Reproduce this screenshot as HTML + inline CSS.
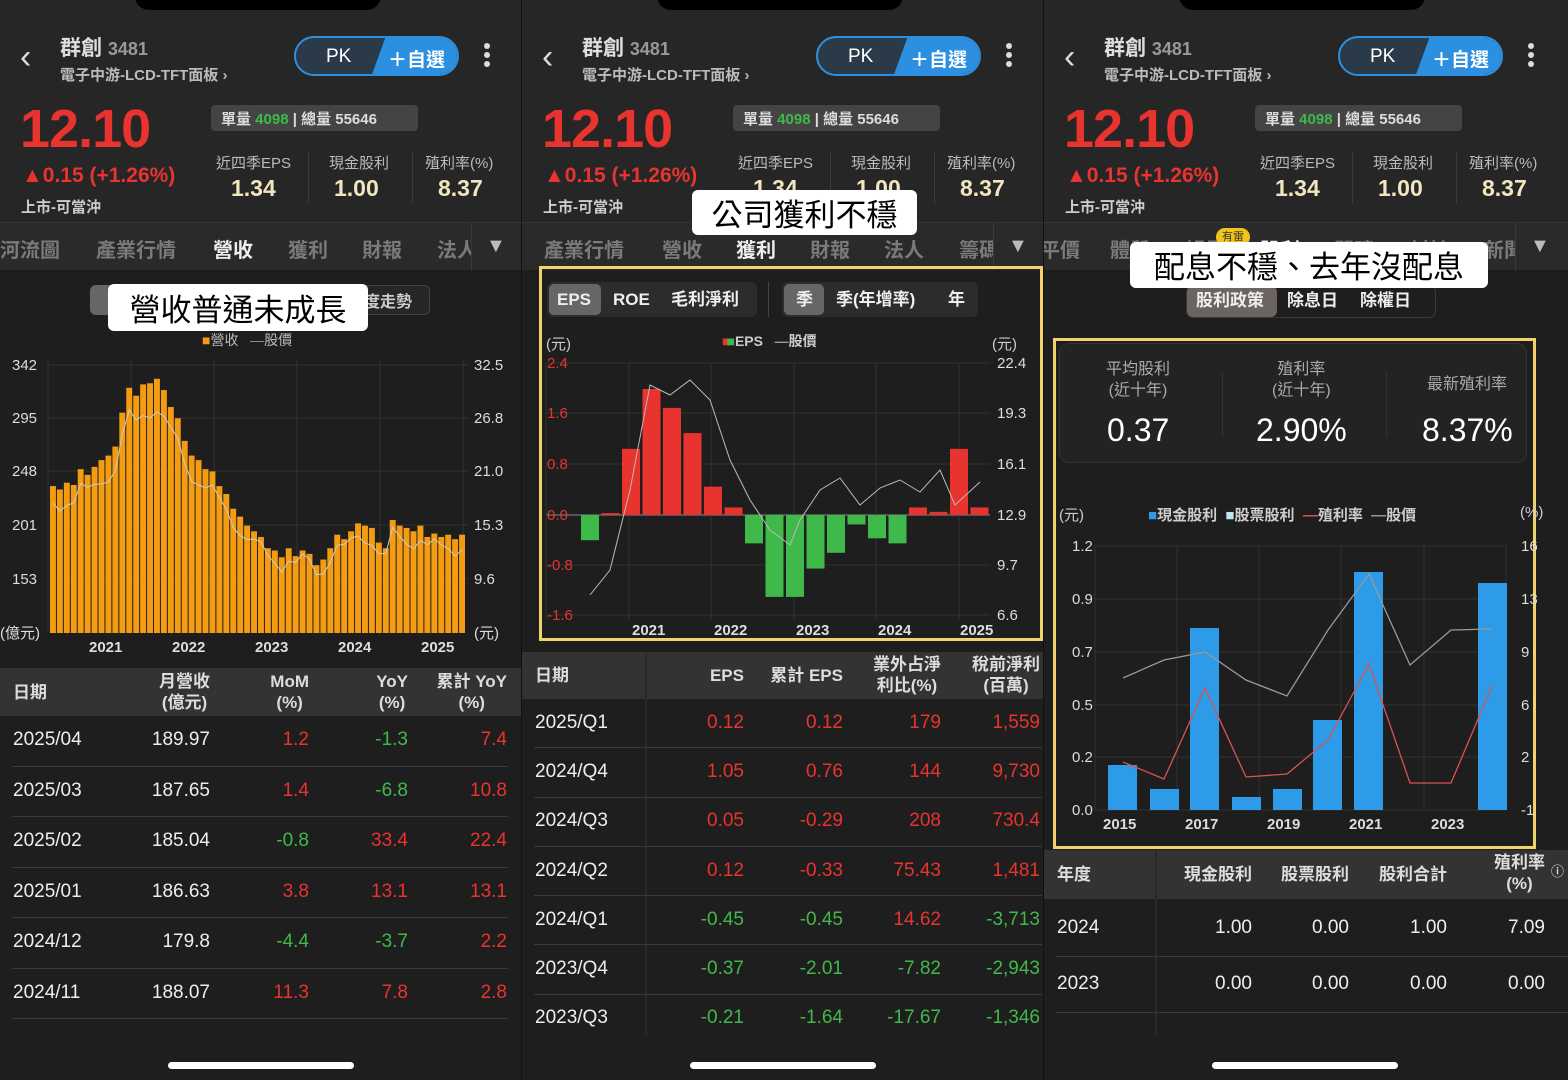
<!DOCTYPE html><html><head><meta charset="utf-8"><style>
*{margin:0;padding:0;box-sizing:border-box}
body{width:1568px;height:1080px;background:#1c1c1c;font-family:"Liberation Sans","Noto Sans CJK TC",sans-serif;color:#ddd;position:relative;overflow:hidden}
.a{position:absolute;white-space:nowrap}
.p{position:absolute;top:0;height:1080px;overflow:hidden;background:#1e1e1e}
.hd{position:absolute;left:0;top:0;width:100%;height:222px;background:#262626}
.notch{position:absolute;top:-12px;width:246px;height:22px;background:#000;border-radius:0 0 14px 14px}
.tabs{position:absolute;top:222px;height:48px;background:#2a2a2a;border-top:1px solid #333;overflow:hidden}
.tabs span{position:absolute;top:11px;font-size:20px;color:#7a7a7a;font-weight:bold}
.w{color:#eee!important}
.r{color:#e8332f}.g{color:#3fb94a}
.th{position:absolute;background:#333;color:#ddd;font-size:17px;font-weight:bold;line-height:1.25}
.row{position:absolute;font-size:19px;color:#eee;border-bottom:1px solid #3a3a3a}
.row span,.th span{position:absolute;text-align:right;white-space:nowrap}
.note{position:absolute;background:#fff;color:#000;font-size:31px;border-radius:6px;text-align:center;font-family:"Noto Sans CJK TC",sans-serif}
.home{position:absolute;top:1062px;width:186px;height:7px;border-radius:4px;background:#fff}
.pill{position:absolute;top:36px;height:40px;width:165px;border:2px solid #2d8fe0;border-radius:20px;overflow:hidden;background:#2b3a48}
.seg{position:absolute;font-size:17px;font-weight:bold;color:#eee;line-height:1}
</style></head><body>
<div id="root"></div>
<script>
function panel(x,w){
 return `<div class="p" style="left:${x}px;width:${w}px">
 <div class="hd"></div><div class="notch" style="left:135px"></div>
 <div class="a" style="left:20px;top:38px;font-size:34px;color:#ddd">‹</div>
 <div class="a" style="left:60px;top:32px;font-size:21px;font-weight:bold;color:#ddd">群創 <span style="color:#999;font-size:18px">3481</span></div>
 <div class="a" style="left:60px;top:64px;font-size:15px;color:#bbb;font-weight:bold">電子中游-LCD-TFT面板 ›</div>
 <div class="pill" style="left:294px"><div class="a" style="left:30px;top:8px;font-size:19px;color:#fff">PK</div><div class="a" style="left:82px;top:-2px;width:100px;height:44px;background:#2d8fe0;transform:skewX(-20deg)"></div><div class="a" style="left:92px;top:7px;font-size:19px;color:#fff;font-weight:bold">＋自選</div></div>
 <div class="a" style="left:484px;top:43px;width:6px;height:6px;border-radius:3px;background:#ddd;box-shadow:0 9px #ddd,0 18px #ddd"></div>
 <div class="a" style="left:20px;top:98px;font-size:54px;font-weight:bold;color:#e8332f;letter-spacing:-1px">12.10</div>
 <div class="a" style="left:22px;top:164px;font-size:21px;font-weight:bold;color:#e8332f">▲0.15 (+1.26%)</div>
 <div class="a" style="left:21px;top:196px;font-size:15px;color:#ccc;font-weight:bold">上市-可當沖</div>
 <div class="a" style="left:211px;top:105px;width:207px;height:26px;background:#444;border-radius:4px;font-size:15px;font-weight:bold;color:#ddd;padding:3px 10px">單量 <span class="g">4098</span> | 總量 55646</div>
 <div class="a" style="left:216px;top:152px;font-size:15px;color:#bbb">近四季EPS</div><div class="a" style="left:231px;top:175px;font-size:23px;font-weight:bold;color:#f1e6c0">1.34</div>
 <div class="a" style="left:329px;top:152px;font-size:15px;color:#bbb">現金股利</div><div class="a" style="left:334px;top:175px;font-size:23px;font-weight:bold;color:#f1e6c0">1.00</div>
 <div class="a" style="left:425px;top:152px;font-size:15px;color:#bbb">殖利率(%)</div><div class="a" style="left:438px;top:175px;font-size:23px;font-weight:bold;color:#f1e6c0">8.37</div>
 <div class="a" style="left:308px;top:152px;width:1px;height:52px;background:#3a3a3a"></div><div class="a" style="left:412px;top:152px;width:1px;height:52px;background:#3a3a3a"></div>
 </div>`;
}
let H='';
H+=panel(0,521)+panel(522,521)+panel(1044,524);
function tabs(x,items){let s=`<div class="tabs" style="left:${x}px;width:${x==1044?524:521}px">`;items.forEach(t=>s+=`<span class="${t[2]||''}" style="left:${t[1]}px">${t[0]}</span>`);s+=`<div class="a" style="left:471px;top:0;width:50px;height:48px;background:#2a2a2a;border-left:1px solid #3a3a3a"></div><span style="left:486px;top:12px;color:#bbb">▼</span></div>`;return s}
H+=tabs(0,[["河流圖",0],["產業行情",96],["營收",213,"w"],["獲利",288],["財報",362],["法人",437]]);
H+=tabs(522,[["產業行情",22],["營收",140],["獲利",214,"w"],["財報",288],["法人",362],["籌碼",437]]);
H+=tabs(1044,[["平價",-4],["體質",66],["婦電",142],["股利",216,"w"],["門睛",290],["討論",366],["新聞",440]]);
H+=`<div class="a" style="left:1216px;top:228px;width:34px;height:18px;border-radius:9px;background:#f0c419;color:#333;font-size:11px;text-align:center;line-height:18px">有雷</div>`;
document.getElementById('root').innerHTML=H;
</script>
<!-- Panel 1 chart -->
<div class="a" style="left:90px;top:285px;width:340px;height:30px;border:1px solid #444;border-radius:6px;background:#262626"></div>
<div class="a" style="left:90px;top:285px;width:60px;height:30px;border-radius:6px;background:#666"></div>
<div class="a" style="left:364px;top:288px;font-size:16px;font-weight:bold;color:#ccc">度走勢</div>
<div class="a" style="left:202px;top:330px;font-size:14px;color:#bbb"><span style="color:#f39c12">■</span>營收 &nbsp; <span style="color:#999">—</span>股價</div>
<svg class="a" style="left:0;top:350px" width="521" height="310" id="c1"></svg>
<div class="note" style="left:108px;top:284px;width:260px;height:47px;line-height:47px">營收普通未成長</div>
<div class="th" style="left:0;top:668px;width:521px;height:48px"><span style="left:13px;top:14px">日期</span><span style="right:311px;top:3px;text-align:center">月營收<br>(億元)</span><span style="right:212px;top:3px;text-align:center">MoM<br>(%)</span><span style="right:113px;top:3px;text-align:center">YoY<br>(%)</span><span style="right:14px;top:3px;text-align:center">累計 YoY<br>(%)</span></div>
<div id="t1"></div>
<!-- Panel 2 -->
<div class="a" style="left:539px;top:266px;width:504px;height:375px;border:3px solid #f2d36b"></div>
<div class="a" style="left:547px;top:282px;width:210px;height:35px;border-radius:6px;background:#2c2c2c"></div>
<div class="a" style="left:549px;top:284px;width:52px;height:31px;border-radius:5px;background:#666"></div>
<div class="seg" style="left:557px;top:291px">EPS</div><div class="seg" style="left:613px;top:291px">ROE</div><div class="seg" style="left:671px;top:291px">毛利淨利</div>
<div class="a" style="left:768px;top:282px;width:1px;height:35px;background:#444"></div>
<div class="a" style="left:782px;top:282px;width:196px;height:35px;border-radius:6px;background:#2c2c2c"></div>
<div class="a" style="left:784px;top:284px;width:40px;height:31px;border-radius:5px;background:#666"></div>
<div class="seg" style="left:796px;top:291px">季</div><div class="seg" style="left:836px;top:291px">季(年增率)</div><div class="seg" style="left:948px;top:291px">年</div>
<div class="a" style="left:546px;top:333px;font-size:15px;color:#ccc">(元)</div><div class="a" style="left:992px;top:333px;font-size:15px;color:#ccc">(元)</div>
<div class="a" style="left:722px;top:331px;font-size:14px;color:#ccc;font-weight:bold"><span class="r">■</span><span class="g" style="margin-left:-4px">■</span>EPS &nbsp; <span style="color:#999">—</span>股價</div>
<svg class="a" style="left:522px;top:350px" width="521" height="290" id="c2"></svg>
<div class="note" style="left:692px;top:190px;width:225px;height:45px;line-height:45px">公司獲利不穩</div>
<div class="th" style="left:522px;top:652px;width:521px;height:47px"><span style="left:13px;top:13px">日期</span><span style="right:299px;top:13px">EPS</span><span style="right:200px;top:13px">累計 EPS</span><span style="right:102px;top:2px;text-align:center">業外占淨<br>利比(%)</span><span style="right:3px;top:2px;text-align:center">稅前淨利<br>(百萬)</span></div>
<div class="a" style="left:645px;top:652px;width:2px;height:385px;background:#2a2a2a"></div>
<div id="t2"></div>
<!-- Panel 3 -->
<div class="a" style="left:1186px;top:285px;width:250px;height:33px;border:1px solid #3a3a3a;border-radius:7px"></div>
<div class="a" style="left:1187px;top:286px;width:90px;height:31px;border-radius:6px;background:#6b6461"></div>
<div class="seg" style="left:1196px;top:292px">股利政策</div><div class="seg" style="left:1287px;top:292px">除息日</div><div class="seg" style="left:1360px;top:292px">除權日</div>
<div class="a" style="left:1053px;top:338px;width:483px;height:511px;border:3px solid #f2d36b"></div>
<div class="a" style="left:1059px;top:343px;width:468px;height:120px;border:1px solid #333;border-radius:10px;background:#232323"></div>
<div class="a" style="left:1106px;top:360px;font-size:16px;color:#aaa;text-align:center;line-height:1.3">平均股利<br>(近十年)</div>
<div class="a" style="left:1272px;top:360px;font-size:16px;color:#aaa;text-align:center;line-height:1.3">殖利率<br>(近十年)</div>
<div class="a" style="left:1427px;top:370px;font-size:16px;color:#aaa">最新殖利率</div>
<div class="a" style="left:1107px;top:412px;font-size:32px;color:#fff">0.37</div>
<div class="a" style="left:1256px;top:412px;font-size:32px;color:#fff">2.90%</div>
<div class="a" style="left:1422px;top:412px;font-size:32px;color:#fff">8.37%</div>
<div class="a" style="left:1222px;top:372px;width:1px;height:65px;background:#333"></div><div class="a" style="left:1386px;top:372px;width:1px;height:65px;background:#333"></div>
<div class="a" style="left:1059px;top:504px;font-size:15px;color:#ccc">(元)</div><div class="a" style="left:1520px;top:504px;font-size:15px;color:#ccc">(%)</div>
<div class="a" style="left:1148px;top:504px;font-size:15px;color:#ccc;font-weight:bold"><span style="color:#2d9be8">■</span>現金股利 &nbsp;<span style="color:#bfe6f7">■</span>股票股利 &nbsp;<span style="color:#d9534f">—</span>殖利率 &nbsp;<span style="color:#999">—</span>股價</div>
<svg class="a" style="left:1044px;top:530px" width="524" height="310" id="c3"></svg>
<div class="note" style="left:1130px;top:242px;width:358px;height:46px;line-height:46px">配息不穩、去年沒配息</div>
<div class="th" style="left:1044px;top:850px;width:524px;height:49px"><span style="left:13px;top:14px">年度</span><span style="right:316px;top:14px">現金股利</span><span style="right:219px;top:14px">股票股利</span><span style="right:121px;top:14px">股利合計</span><span style="right:23px;top:2px;text-align:center">殖利率<br>(%)</span><span style="right:4px;top:14px;font-size:13px">ⓘ</span></div>
<div class="a" style="left:1155px;top:850px;width:2px;height:185px;background:#2a2a2a"></div>
<div id="t3"></div>
<script>
function svg(id,html){document.getElementById(id).innerHTML=html}
let c='';const base=283;
const ly=[[342,15],[295,68],[248,121],[201,175],[153,229]];const ry=['32.5','26.8','21.0','15.3','9.6'];
ly.forEach((l,i)=>{c+=`<line x1="48" x2="468" y1="${l[1]}" y2="${l[1]}" stroke="#333"/><text x="12" y="${l[1]+5}" fill="#ddd" font-size="15">${l[0]}</text><text x="474" y="${l[1]+5}" fill="#ddd" font-size="15">${ry[i]}</text>`});
[48,131,214,297,380,463].forEach(x=>c+=`<line x1="${x}" x2="${x}" y1="10" y2="${base}" stroke="#333"/>`);
const v=[235,232,238,236,250,245,252,258,262,270,300,322,315,325,326,330,320,305,295,275,262,258,250,248,235,228,215,208,200,195,190,180,178,172,180,173,178,175,165,170,180,192,188,195,202,200,198,185,180,205,200,198,195,200,190,193,190,192,188,192];
let bw=416/v.length;
v.forEach((d,i)=>{let hh=(d-105)*1.13;c+=`<rect x="${50+i*bw}" y="${base-hh}" width="${bw-1}" height="${hh}" fill="#f39c12"/>`});
let pts=[];v.forEach((d,i)=>{pts.push(`${53+i*bw},${base-(d-120)*1.0-15+Math.sin(i)*6}`)});
c+=`<polyline points="${pts.join(' ')}" fill="none" stroke="#ccc" stroke-width="1"/>`;
c+=`<text x="0" y="288" fill="#ddd" font-size="15">(億元)</text><text x="474" y="288" fill="#ddd" font-size="15">(元)</text>`;
['2021','2022','2023','2024','2025'].forEach((t,i)=>c+=`<text x="${89+i*83}" y="302" fill="#ddd" font-size="15" font-weight="bold">${t}</text>`);
svg('c1',c);
c='';const z=165;
const yl=[['2.4',13],['1.6',63],['0.8',114],['0.0',165],['-0.8',215],['-1.6',265]];const yr=['22.4','19.3','16.1','12.9','9.7','6.6'];
yl.forEach((l,i)=>{c+=`<line x1="24" x2="468" y1="${l[1]}" y2="${l[1]}" stroke="${i==3?'#888':'#333'}"/><text x="25" y="${l[1]+5}" fill="#e8332f" font-size="15">${l[0]}</text><text x="475" y="${l[1]+5}" fill="#ddd" font-size="15">${yr[i]}</text>`});
[24,107,189,272,354,437].forEach(x=>c+=`<line x1="${x}" x2="${x}" y1="13" y2="270" stroke="#333"/>`);
const e=[-0.4,0.03,1.05,2.0,1.7,1.3,0.45,0.12,-0.45,-1.3,-1.3,-0.85,-0.6,-0.15,-0.37,-0.45,0.12,0.05,1.05,0.12];
e.forEach((d,i)=>{let hh=Math.abs(d)*63;c+=`<rect x="${59+i*20.5}" y="${d>0?z-hh:z}" width="18" height="${hh}" fill="${d>0?'#e8332f':'#3fb94a'}"/>`});
c+=`<polyline points="68,245 88,220 108,140 128,35 148,45 168,30 188,50 208,110 228,150 248,180 268,195 278,170 298,140 318,128 338,155 358,138 378,130 398,142 418,120 433,155 458,132" fill="none" stroke="#bbb" stroke-width="1"/>`;
['2021','2022','2023','2024','2025'].forEach((t,i)=>c+=`<text x="${110+i*82}" y="285" fill="#ddd" font-size="15" font-weight="bold">${t}</text>`);
svg('c2',c);
c='';const b3=280;
const l3=[['1.2',16],['0.9',69],['0.7',122],['0.5',175],['0.2',227],['0.0',280]];const r3=['16','13','9','6','2','-1'];
l3.forEach((l,i)=>{c+=`<line x1="51" x2="462" y1="${l[1]}" y2="${l[1]}" stroke="#333"/><text x="28" y="${l[1]+5}" fill="#ddd" font-size="15">${l[0]}</text><text x="477" y="${l[1]+5}" fill="#ddd" font-size="15">${r3[i]}</text>`});
[51,133,215,297,380,462].forEach(x=>c+=`<line x1="${x}" x2="${x}" y1="16" y2="280" stroke="#333"/>`);
[[64,235],[106,259],[146,98],[188,267],[229,259],[269,190],[310,42],[434,53]].forEach(b=>c+=`<rect x="${b[0]}" y="${b[1]}" width="29" height="${b3-b[1]}" fill="#2d9be8"/>`);
c+=`<polyline points="79,148 120,130 161,122 202,150 243,166 284,100 325,44 366,135 407,100 448,99" fill="none" stroke="#999" stroke-width="1.3"/>`;
c+=`<polyline points="79,232 120,249 161,158 202,247 243,244 284,210 325,134 366,253 407,253 448,156" fill="none" stroke="#d9534f" stroke-width="1.3"/>`;
['2015','2017','2019','2021','2023'].forEach((t,i)=>c+=`<text x="${59+i*82}" y="299" fill="#ddd" font-size="15" font-weight="bold">${t}</text>`);
svg('c3',c);
function table(id,x,top,rh,cols,rows,w){let s='';rows.forEach((r,i)=>{s+=`<div class="row" style="left:${x+12}px;top:${top+i*rh}px;width:${w}px;height:${rh}px">`;r.forEach((cell,j)=>{let cl=cell[1]||'';let st=j==0?`left:1px`:`right:${cols[j]}px`;s+=`<span class="${cl}" style="${st};top:${rh/2-12}px">${cell[0]}</span>`});s+='</div>'});document.getElementById(id).innerHTML=s}
const R='r',G='g';
table('t1',0,716,50.5,[0,298,199,100,1],[
[['2025/04'],['189.97'],['1.2',R],['-1.3',G],['7.4',R]],
[['2025/03'],['187.65'],['1.4',R],['-6.8',G],['10.8',R]],
[['2025/02'],['185.04'],['-0.8',G],['33.4',R],['22.4',R]],
[['2025/01'],['186.63'],['3.8',R],['13.1',R],['13.1',R]],
[['2024/12'],['179.8'],['-4.4',G],['-3.7',G],['2.2',R]],
[['2024/11'],['188.07'],['11.3',R],['7.8',R],['2.8',R]]],496);
table('t2',522,699,49.3,[0,298,199,101,2],[
[['2025/Q1'],['0.12',R],['0.12',R],['179',R],['1,559',R]],
[['2024/Q4'],['1.05',R],['0.76',R],['144',R],['9,730',R]],
[['2024/Q3'],['0.05',R],['-0.29',R],['208',R],['730.4',R]],
[['2024/Q2'],['0.12',R],['-0.33',R],['75.43',R],['1,481',R]],
[['2024/Q1'],['-0.45',G],['-0.45',G],['14.62',R],['-3,713',G]],
[['2023/Q4'],['-0.37',G],['-2.01',G],['-7.82',G],['-2,943',G]],
[['2023/Q3'],['-0.21',G],['-1.64',G],['-17.67',G],['-1,346',G]]],508);
table('t3',1044,901,56,[0,316,219,121,23],[
[['2024'],['1.00'],['0.00'],['1.00'],['7.09']],
[['2023'],['0.00'],['0.00'],['0.00'],['0.00']]],512);
</script>
<div class="a" style="left:0;top:1035px;width:1568px;height:45px;background:#1e1e1e"></div>
<div class="home" style="left:168px"></div><div class="home" style="left:690px"></div><div class="home" style="left:1212px"></div>
<div class="a" style="left:521px;top:0;width:1px;height:1080px;background:#111"></div>
<div class="a" style="left:1043px;top:0;width:1px;height:1080px;background:#111"></div>
</body></html>
